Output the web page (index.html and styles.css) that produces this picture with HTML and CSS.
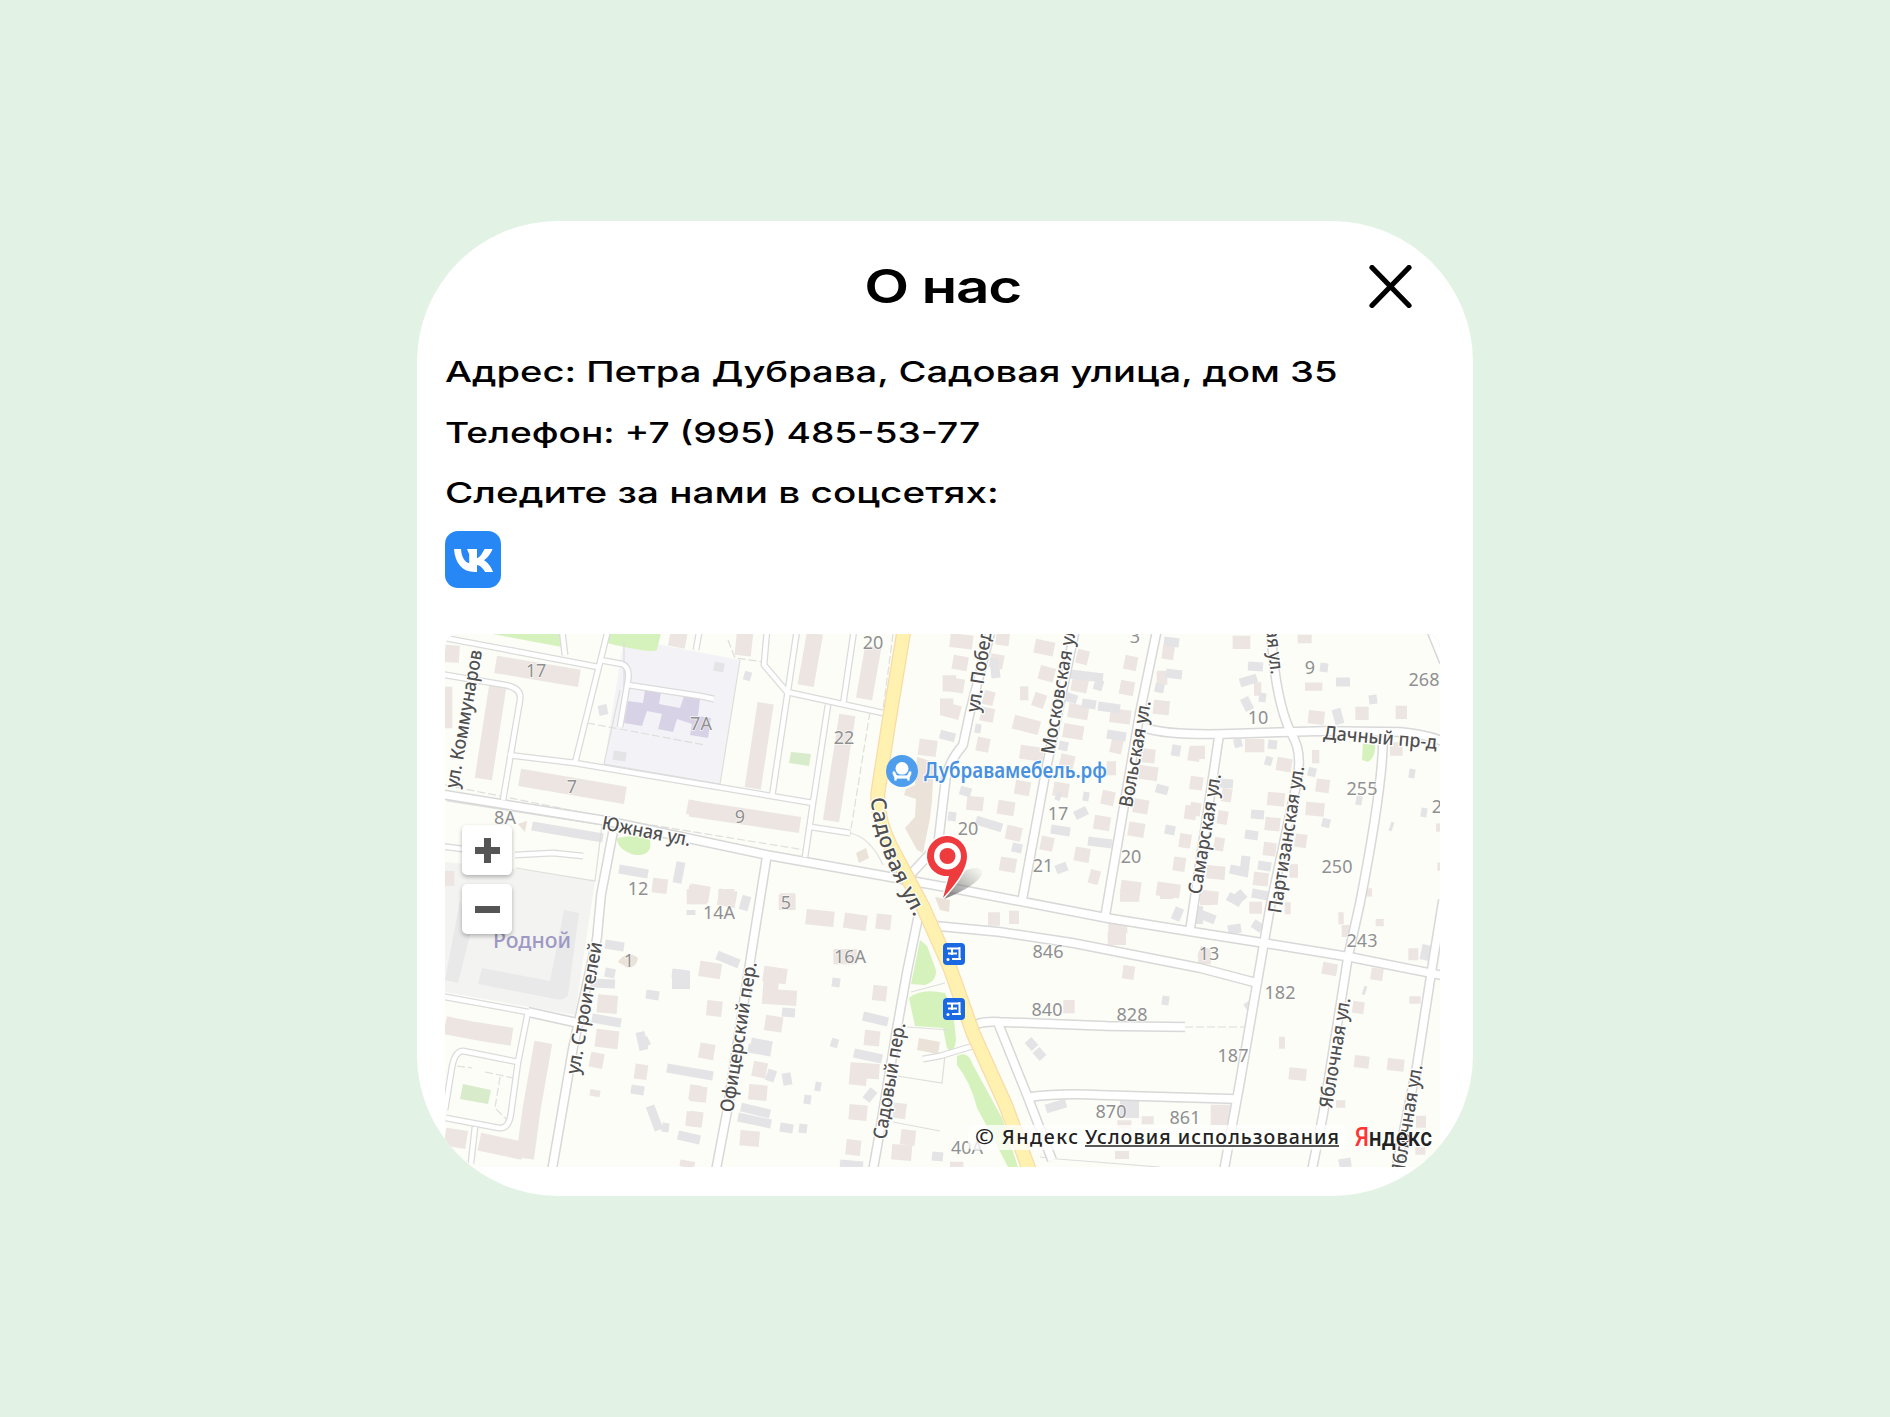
FILE: index.html
```html
<!DOCTYPE html>
<html lang="ru">
<head>
<meta charset="utf-8">
<title>О нас</title>
<link rel="stylesheet" href="styles.css">
</head>
<body>
<main class="card">
  <header class="head">
    <h1 class="title">О нас</h1>
    <button class="close" aria-label="Закрыть"><svg width="43" height="43" viewBox="0 0 43 43"><path d="M3 2.500 40 40.500M40 2.500 3 40.500"/></svg></button>
  </header>
  <div class="lines">
    <p class="line address">Адрес: Петра Дубрава, Садовая улица, дом 35</p>
    <p class="line phone">Телефон: +7 (995) 485-53-77</p>
    <p class="line social">Следите за нами в соцсетях:</p>
  </div>
  <a class="vk" aria-label="VK"><svg width="56" height="57" viewBox="0 0 56 57"><rect width="56" height="57" rx="13" fill="#2787f5"/><path fill="#fff" d="M29.8 41C17.200 41 10.000 32.200 9 18H16C16.500 27 20.500 31.500 24.200 32.200V23.200L22 18H32V27.200C35 26.500 37.300 22.200 39.600 18H47.500C46 22.500 42.100 27.200 39 29.200C42.100 30.700 46.200 35.500 48 41H40.200C38 37.500 35.700 34.500 32 34V41Z"/></svg></a>
  <section class="map">
    <svg class="map-canvas" width="995" height="533" viewBox="445 634 995 533">
      <defs>
        <path id="sadovaya" d="M871 798C873 832 887 868 914 916"/>
        <linearGradient id="shade" x1="0" y1="1" x2="1" y2="0"><stop offset="0" stop-color="#555" stop-opacity=".8"/><stop offset="1" stop-color="#777" stop-opacity="0"/></linearGradient>
        <g id="roads-main">
          <path d="M440 794 607 821 767 855 890 877 967 891 1107 918 1200 933 1270 944 1350 957 1445 976"/>
          <path d="M613 832 601 895 597 938 573 1048 552 1170M767 855 750 962 727 1112 716 1170M918 918 907 972 897 1028 878 1142 873 1170"/>
          <path d="M937 926 1000 932 1073 943 1200 968 1257 983"/>
          <path d="M991 630 970 712 963 745Q946 765 945 785L938 845 912 873M1075 630 1047 765 1022 901M1157 630 1140 712 1123 812 1105 917"/>
          <path d="M1146 728Q1165 735 1223 734L1325 731 1400 732Q1425 734 1442 741"/>
          <path d="M1271 630Q1275 700 1291 733C1303 752 1300 770 1292 805L1270 908 1240 1082 1224 1170M1219 736 1190 930M1383 742Q1382 790 1360 903L1348 957 1323 1115 1312 1170M1443 900 1432 968 1417 1065 1396 1170"/>
          <path d="M977 1024Q985 1021 1000 1022L1107 1026 1185 1027M998 1023 1027 1095 1052 1160M1030 1097Q1060 1093 1100 1095L1236 1099M1431 630 1444 662M528 1012 578 1023"/>
        </g>
        <g id="roads-thin">
          <path d="M440 637 598 667M608 630 575 763M600 660 622 664Q630 667 628 680L620 727M628 685 700 696 714 699M440 674 505 685Q522 688 520 700L503 800M508 755 575 763 700 784 813 803"/>
          <path d="M767 630 764 665 787 692 883 713M797 630 772 797M854 630 843 705M828 705 813 803 805 857M811 827 850 833M699 633 696 650M515 855 553 853 583 856M562 630 565 655M440 846 463 849"/>
          <path d="M440 996 528 1012 518 1062 511 1113Q509 1129 499 1128L446 1118M518 1062 463 1051Q455 1051 452 1067L445 1110M475 1127 471 1163M923 1059 940 1056 973 1046"/>
        </g>
      </defs>
      <rect x="445" y="634" width="995" height="533" class="ground"/>

      <g class="areas">
        <path fill="#f3f3f1" d="M445 862 510 868 595 880 575 1015 445 992Z"/>
        <path fill="#f3f3f7" d="M624 638 740 660 720 784 604 764Z"/>
        <path fill="#d5f2bd" d="M487 633 564 633 562 647ZM607 633 661 633 657 650Q653 654 607 643Z"/>
        <path fill="#d5f2bd" d="M617 838Q642 833 650 840 653 856 635 855 617 850 617 838ZM920 940 927 946 936 970Q937 981 925 985L911 984ZM909 998Q920 988 945 993L953 1010 956 1040Q954 1056 947 1048L943 1028 915 1026ZM957 1056Q968 1050 973 1065L1002 1118 1018 1167H1008Q988 1128 977 1108 971 1083 957 1065ZM1363 743 1375 745Q1376 757 1368 762L1362 760Z"/>
        <path fill="#d8eccb" d="M791 752 811 754 809 766 789 763ZM463 1084 491 1090 488 1104 460 1099Z"/>
        <path fill="#ebe2d9" d="M917 757 934 762 932 800 930 818 923 853 917 850 905 828 915 817 916 799 904 795 906 789 915 785ZM856 853 866 848 869 858 859 863ZM919 1038 940 1042 938 1054 917 1050ZM618 962Q627 949 638 958 637 967 628 968ZM518 824 527 821 525 832ZM935 897 950 900 949 912 940 910Z"/>
        <path fill="#e9e9ea" d="M460 900 445 980 458 983 470 935ZM564 910 579 913 568 995Q564 1001 555 999L478 984 482 968 550 981Z"/>
        <path fill="#d7d2e5" d="M645 690 661 692 659 704 680 708 684 696 700 699 698 716 711 718 708 738 690 735 692 724 677 719 673 732 658 729 662 714 647 711 642 726 624 723 628 701 643 703Z"/>
      </g>

      <g class="house" transform="translate(440 625) scale(.33333)">
        <path stroke-width="52" d="M167 118 418 160M173 185 130 462M239 457 556 511M15 85 58 88"/>
        <path stroke-width="44" d="M15 185 15 310M688 40 738 50M742 545 780 552M637 780l45 5M745 800l40 5M15 760h28"/>
      </g>
      <g class="house" transform="translate(690 625) scale(.33333)">
        <path stroke-width="49" d="M165 25 158 92M375 25 347 182M550 65 522 222M227 235 188 490M472 270 423 588M0 550 330 600M686 365 740 372M758 175h40M750 245h40"/>
        <path stroke-width="50" d="M0 800 58 810M85 815 138 825M270 830h46"/>
      </g>
      <g class="house" transform="translate(940 625) scale(.33333)">
        <path stroke-width="42" d="M30 45l68 8M168 38l40 5M38 110l45 8M12 175l60 10M150 105l40 8M130 215l32 8M5 250l55 15M122 265l40 8M284 62l58 12M298 140l45 12M280 220l35 12M240 205h25M220 290l78 20M410 92l35 8M395 175l48 10M385 255l60 10M370 315l60 10M110 355l38 8M240 380l70 10M360 405l42 10M225 485l45 8M340 490l46 8M173 545l50 8M80 533l50 5M198 620l46 10M302 652l38 8M180 715l48 8M404 685l45 8M448 752l30 8M553 110l38 8M540 185l42 8M510 270l62 8M512 360l35 8M600 390l45 5M595 440l58 8M485 515l38 8M580 540l45 8M462 590l48 8M565 610l48 8M542 785l60 8M667 80l35 5M640 245l48 5M650 158h32M745 385l35 5M734 560l35 5M718 645l35 5M700 715l36 5M650 790l70 10M500 430h28"/>
      </g>
      <g class="house" transform="translate(1190 625) scale(.33333)">
        <path stroke-width="40" d="M128 52h53M192 192h22M0 382h45M165 362h58M260 415l45 8M0 472l38 5M0 550l32 5M95 508l30 5M83 575l30 5M72 655l30 5M366 395h22M232 520l52 5M225 595l45 5M220 670l38 5M315 645l35 5M378 480l40 5M347 550l56 5M355 275l48 5M496 265h40M617 262h34M600 372h38M50 740l55 5M190 760l45 5M35 815l50 5M298 738h26"/>
        <path stroke-width="25" d="M323 42h42M345 185h52M530 802h16M738 608h14M742 725h12"/>
      </g>
      <g class="house" transform="translate(440 895) scale(.33333)">
        <path stroke-width="54" d="M15 390Q80 405 216 425M15 725l65 10M118 740 250 768M310 442 275 640 255 790M472 325l60 5M467 428l68 8"/>
        <path stroke-width="45" d="M450 492l40 8M584 528l38 5M748 590l35 5M738 670l45 5M740 5h40"/>
        <path stroke-width="20" d="M450 592l30 5M720 803l44 8"/>
      </g>
      <g class="house" transform="translate(690 895) scale(.33333)">
        <path stroke-width="46" d="M0 5h50M85 5h48M266 22h50M348 65l84 8M462 75l68 10M558 78l45 5M430 185h70M28 220l65 10M50 338l46 5M28 465l45 8M220 235l70 10M245 235 240 305 320 310M225 382l52 8M188 520l42 8M176 590l55 5M150 728l58 5M0 595l50 5M0 670l38 5M548 292l42 5M523 427l46 5M480 525l88 5M478 545l52 5M477 650l54 5M610 645l38 5M468 755l44 5M632 725l44 5M605 770l60 5"/>
      </g>
      <g class="house" transform="translate(940 895) scale(.33333)">
        <path stroke-width="40" d="M144 72h36M207 67h30M370 335h34M548 230l35 5M505 95h57M503 130h55M775 190h10"/>
        <path stroke-width="24" d="M540 8h58M605 676h36M525 780h42M532 688h42M660 0h40M30 812h40"/>
      </g>
      <g class="house" transform="translate(1190 895) scale(.33333)">
        <path stroke-width="36" d="M30 12h42M178 38h38M284 40h18M27 170l30 10M25 190h38M397 218l44 8M445 70h16M455 108h24M655 178h30M543 235l36 5M488 335l34 5M267 443h18M493 498l44 5M592 507l50 5M297 535l52 5M678 680h30"/>
        <path stroke-width="22" d="M557 83h24M658 315h34M438 627h28M676 768h30M62 640h68M62 660h68M62 680h68"/>
      </g>

      <g class="shed">
        <path stroke-width="9" d="M532 826 603 838M619 869 648 874M677 883 681 862M714 666 724 668M744 675 751 677M613 755 626 757M602 705 604 715M605 944 624 947M605 972 615 974M592 983 615 984M592 1018 621 1023M672 973 689 975M646 994 659 996M645 1042 649 1040M644 1050 640 1032M667 1068 713 1076M631 1089 644 1091M650 1106 659 1130M662 1127 669 1128M678 1135 700 1140M691 915V910M717 955 739 964M748 1048 771 1052M751 1042 772 1046M782 1012 795 1013M741 1107 770 1114M738 1117 771 1124M780 1127 793 1129M799 1128 807 1129M804 1099 811 1100M815 1086 821 1087M786 1073 788 1085M769 1081 773 1070M863 1016 888 1022M854 1053 882 1059M866 1100 874 1090M840 1164 863 1166M832 982 840 983M831 1042 838 1044M932 1156 943 1157M743 910 747 896"/>
        <path stroke-width="9" d="M940 734 955 738M960 790 971 793M948 816 956 817M976 820 1002 828M994 658 996 678M975 728 981 729M1070 674 1103 678M1100 680 1097 690M1065 696 1077 700M1098 706 1120 709M1082 703 1096 705M1059 745 1068 747M1056 795 1061 797M1083 796 1089 797M1075 816 1087 810M1051 829 1070 832M1012 847 1022 849M1056 870 1067 866M1088 841 1112 844M1166 673 1182 675M1164 641 1179 643M1155 687 1164 689M1107 734 1126 737M1156 788 1168 791M1165 829 1175 831M1175 756 1177 745"/>
        <path stroke-width="9" d="M1248 666 1263 667M1240 683 1257 678M1244 698 1250 710M1259 697 1266 698M1320 667 1328 668M1336 682 1350 682M1336 709 1340 724M1369 700 1377 699M1234 744 1242 742M1268 744 1277 745M1265 760 1272 762M1219 783 1233 784M1251 814 1264 815M1245 834 1258 836M1258 865 1271 867M1230 869 1244 872 1246 856M1252 893 1268 896M1237 892 1244 900M1308 771 1316 773M1322 822 1330 824M1356 800 1362 801M1409 773 1415 774M1390 826 1393 827M1421 812 1427 813M1195 912 1215 920M1228 896 1241 903M1228 930 1241 928M1253 923 1262 929M1247 1002 1251 1008M1162 1000 1169 1001M1028 1040 1035 1048M1036 1050 1043 1058M1046 1109 1066 1103M1363 990 1366 991M1427 945 1424 960M1339 1164 1351 1162M1175 920 1180 908"/>
        <path stroke-width="18" d="M1120 1109H1139M672 980H690M1195 915h8"/>
      </g>

      <g class="trails">
        <path class="dash" d="M587 723 625 730 705 745M445 785 620 820 805 850M870 712 850 835M893 634 883 710M1185 1027H1248M457 1066 472 1068M485 1072 518 1079M500 1077 495 1108 511 1124M728 640 735 658 764 662"/>
        <path d="M447 801Q520 812 602 825L595 881 516 868M850 833Q870 837 883 865M897 1076 942 1083 945 1055M907 1027 950 1030M911 992 945 983M893 1122 940 1131M624 642V720M740 660 720 784 604 764 620 690M1040 1157 1058 1159 1160 1167"/>
      </g>

      <use href="#roads-thin" class="thin-edge"/><use href="#roads-main" class="main-edge"/>
      <use href="#roads-thin" class="thin-fill"/><use href="#roads-main" class="main-fill"/>
      <path class="highway-edge" d="M904 630 890 715 878 792Q876 815 890 845L923 907 950 968 973 1033 1006 1106 1030 1172"/>
      <path class="highway" d="M904 630 890 715 878 792Q876 815 890 845L923 907 950 968 973 1033 1006 1106 1030 1172"/>

      <g class="numbers">
        <text x="536" y="677">17</text><text x="701" y="730">7А</text><text x="572" y="793">7</text><text x="740" y="823">9</text><text x="505" y="824">8А</text><text x="873" y="649">20</text><text x="844" y="744">22</text><text x="638" y="895">12</text><text x="719" y="919">14А</text><text x="786" y="909">5</text><text x="850" y="963">16А</text><text x="629" y="967">1</text><text x="1135" y="643">3</text><text x="968" y="835">20</text><text x="1058" y="820">17</text><text x="1043" y="872">21</text><text x="1131" y="863">20</text><text x="1258" y="724">10</text><text x="1310" y="674">9</text><text x="1429" y="686">268Е</text><text x="1362" y="795">255</text><text x="1337" y="873">250</text><text x="1437" y="813">2</text><text x="1362" y="947">243</text><text x="1209" y="960">13</text><text x="1280" y="999">182</text><text x="1233" y="1062">187</text><text x="1048" y="958">846</text><text x="1047" y="1016">840</text><text x="1132" y="1021">828</text><text x="1111" y="1118">870</text><text x="1185" y="1124">861</text><text x="967" y="1154">40А</text>
      </g>

      <g class="streets">
        <text transform="translate(458 789) rotate(-80)" textLength="140" lengthAdjust="spacingAndGlyphs">ул. Коммунаров</text>
        <text transform="translate(601 829) rotate(11)" textLength="90" lengthAdjust="spacingAndGlyphs">Южная ул.</text>
        <text class="big" textLength="128"><textPath href="#sadovaya">Садовая ул.</textPath></text>
        <text transform="translate(979 713) rotate(-81)" textLength="97" lengthAdjust="spacingAndGlyphs">ул. Победы</text>
        <text transform="translate(1054 755) rotate(-80)" textLength="134" lengthAdjust="spacingAndGlyphs">Московская ул.</text>
        <text transform="translate(1132 808) rotate(-80)" textLength="108" lengthAdjust="spacingAndGlyphs">Вольская ул.</text>
        <text transform="translate(1201 895) rotate(-80.500)" textLength="122" lengthAdjust="spacingAndGlyphs">Самарская ул.</text>
        <text transform="translate(1281 914) rotate(-81)" textLength="149" lengthAdjust="spacingAndGlyphs">Партизанская ул.</text>
        <text transform="translate(1265 619) rotate(84)" textLength="56" lengthAdjust="spacingAndGlyphs">ная ул.</text>
        <text transform="translate(1323 739) rotate(5)" textLength="114" lengthAdjust="spacingAndGlyphs">Дачный пр-д</text>
        <text transform="translate(1332 1109) rotate(-80.500)" textLength="112" lengthAdjust="spacingAndGlyphs">Яблочная ул.</text>
        <text transform="translate(1404 1176) rotate(-80.500)" textLength="112" lengthAdjust="spacingAndGlyphs">Яблочная ул.</text>
        <text transform="translate(733 1113) rotate(-81)" textLength="152" lengthAdjust="spacingAndGlyphs">Офицерский пер.</text>
        <text transform="translate(886 1140) rotate(-80.500)" textLength="118" lengthAdjust="spacingAndGlyphs">Садовый пер.</text>
        <text transform="translate(579 1075) rotate(-80)" textLength="134" lengthAdjust="spacingAndGlyphs">ул. Строителей</text>
      </g>
      <text class="district" x="493" y="948" textLength="78" lengthAdjust="spacingAndGlyphs">Родной</text>

      <g class="poi">
        <circle cx="902" cy="771" r="16"/>
        <g fill="#fff"><circle cx="902" cy="768.500" r="6.500"/><path d="M892 773Q892 770 895 771L897 775H907L909 771Q912 770 912 773L910 778V781H907V779H897V781H894V778Z" stroke="#4f9eee" stroke-width=".8"/></g>
        <text x="924" y="778" textLength="183" lengthAdjust="spacingAndGlyphs">Дубравамебель.рф</text>
      </g>

      <g class="stop" transform="translate(943 943)"><rect width="22" height="22" rx="4"/><path d="M4 5.500H16M5 10.500H14M9 16H18M16.500 4V17M9 5V12"/><circle cx="5" cy="16.500" r="1.500"/></g>
      <g class="stop" transform="translate(943 998)"><rect width="22" height="22" rx="4"/><path d="M4 5.500H16M5 10.500H14M9 16H18M16.500 4V17M9 5V12"/><circle cx="5" cy="16.500" r="1.500"/></g>

      <path fill="url(#shade)" d="M944 898 966 870Q985 864 982 874 977 886 944 899Z"/>
      <path class="pin" d="M943 898 949 876A20 20 0 1 1 967 856C967 872 951 889 943 898Z"/>
      <circle cx="947.500" cy="856" r="13.500" fill="#fff"/><circle cx="947.500" cy="856" r="8" fill="#ee3b3e"/>

      <rect x="968" y="1125" width="378" height="25" rx="5" fill="#fff" fill-opacity=".75"/>
      <g class="legal">
        <text x="975" y="1144" textLength="19" lengthAdjust="spacingAndGlyphs">©</text>
        <text x="1002" y="1144" textLength="76">Яндекс</text>
        <text x="1085" y="1144" textLength="254">Условия использования</text>
        <path d="M1085 1146H1339" stroke="#222" stroke-width="1.500"/>
      </g>
      <text class="logo" x="1355" y="1146" textLength="77" lengthAdjust="spacingAndGlyphs"><tspan fill="#ff3333">Я</tspan>ндекс</text>
    </svg>
    <div class="zoom">
      <button aria-label="Приблизить"><svg width="25" height="25" viewBox="0 0 25 25"><path d="M0 12.500H25M12.500 0V25"/></svg></button>
      <button aria-label="Отдалить"><svg width="25" height="25" viewBox="0 0 25 25"><path d="M0 12.500H25"/></svg></button>
    </div>
  </section>
</main>
</body>
</html>
```
FILE: styles.css
```css
* { box-sizing: border-box; }
body {
  margin: 0;
  width: 1890px;
  height: 1417px;
  background: #e2f3e5;
  display: flex;
  justify-content: center;
  padding-top: 221px;
  font-family: Inter, "Noto Sans", sans-serif;
  color: #000;
}
.card {
  width: 1056px;
  height: 975px;
  background: #fff;
  border-radius: 141px;
  overflow: hidden;
  padding: 43px 28px 0;
  display: flex;
  flex-direction: column;
}
.head {
  display: grid;
  grid-template-columns: 1fr auto 1fr;
  height: 45px;
  align-items: center;
}
.title {
  grid-column: 2;
  margin: 0;
  font-size: 46px;
  line-height: 45px;
  font-weight: 600;
  letter-spacing: -1px;
  white-space: nowrap;
  transform: translateX(-2px) scaleX(1.27);
}
button { border: 0; background: none; padding: 0; }
.close { justify-self: end; margin-right: 33px; height: 43px; }
.close svg { display: block; }
.close path { stroke: #000; stroke-width: 5.2; stroke-linecap: round; }
.lines { margin-top: 33px; height: 182px; }
.line {
  margin: 0;
  height: 60.5px;
  line-height: 60.5px;
  font-size: 29px;
  font-weight: 450;
  white-space: nowrap;
  transform-origin: left;
}
.address { transform: scaleX(1.315); }
.phone { transform: scaleX(1.281); }
.social { transform: scaleX(1.333); }
.vk { margin-top: 7px; height: 57px; width: 56px; }
.vk svg { display: block; }
.map {
  position: relative;
  width: 995px;
  height: 533px;
  margin-top: 46px;
  border-radius: 14px 14px 0 0;
  overflow: hidden;
}
.map-canvas { display: block; font-family: "Noto Sans", sans-serif; }
.ground { fill: #fbfdf6; }
.house path { fill: none; stroke: #ece5e2; }
.shed path { fill: none; stroke: #e4e4e7; }
.trails path { fill: none; stroke: #dededc; stroke-width: 1.2; }
.trails .dash { stroke-dasharray: 8 3; }
.thin-edge, .thin-fill, .main-edge, .main-fill { fill: none; stroke-linejoin: round; }
.thin-edge { stroke: #dbdbdb; stroke-width: 7; }
.thin-fill { stroke: #fff; stroke-width: 4.5; }
.main-edge { stroke: #d8d8d8; stroke-width: 10.5; }
.main-fill { stroke: #fff; stroke-width: 7.5; }
.highway-edge { fill: none; stroke: #f9dba6; stroke-width: 15; }
.highway { fill: none; stroke: #fff1b0; stroke-width: 12.5; }
.numbers { fill: #909090; font-size: 18px; paint-order: stroke; text-anchor: middle; stroke: #fff; stroke-width: 1.5px; stroke-opacity: .7; }
.streets { fill: #505050; font-size: 19px; font-weight: 500; paint-order: stroke; stroke: #fff; stroke-width: 2.5px; }
.streets .big { font-size: 21px; }
.district { fill: #9d99c4; font-size: 21px; font-weight: 500; }
.poi circle { fill: #4f9eee; }
.poi g circle { fill: #fff; }
.poi text { fill: #4791df; font-size: 21px; font-weight: 600; paint-order: stroke; stroke: #fff; stroke-width: 2px; }
.stop rect { fill: #1b68e3; }
.stop path { fill: none; stroke: #fff; stroke-width: 2; }
.stop circle { fill: #fff; }
.pin { fill: #ee3b3e; stroke: #fff; stroke-width: 3; paint-order: stroke; }
.legal text { fill: #222; font-size: 19.5px; font-weight: 500; }
.logo { fill: #222; font-family: Roboto, sans-serif; font-size: 26px; font-weight: 500; paint-order: stroke; stroke: #fff; stroke-width: 2px; }
.zoom {
  position: absolute;
  left: 17px;
  top: 191px;
  display: grid;
  gap: 9px;
}
.zoom button {
  width: 50px;
  height: 50px;
  background: #fff;
  border-radius: 5px;
  box-shadow: 0 2px 4px rgba(0, 0, 0, .28);
  display: grid;
  place-items: center;
}
.zoom path { stroke: #555; stroke-width: 7; }
```
